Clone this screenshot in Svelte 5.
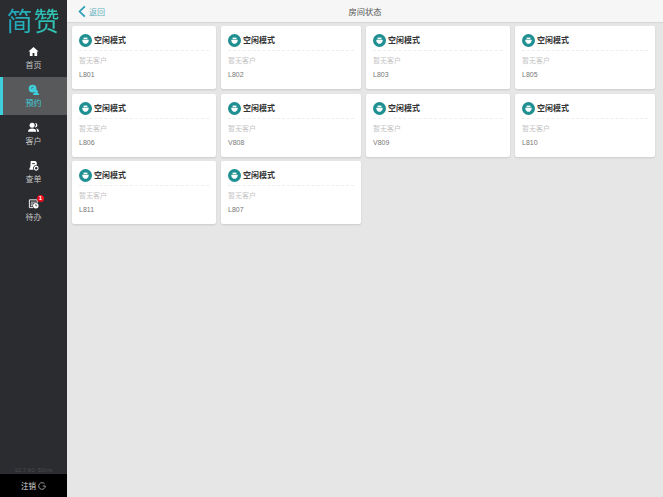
<script>
  const rooms = ['L801', 'L802', 'L803', 'L805', 'L806', 'V808', 'V809', 'L810', 'L811', 'L807'];
</script>

<div class="page">
  <aside class="sidebar">
    <div class="logo">简赞</div>
    <nav>
      <div class="nav-item">
        <svg viewBox="0 0 24 24" width="11" height="11">
          <path fill="currentColor" d="M12 2 1 12h3v10h6v-7h4v7h6V12h3z"/>
        </svg>
        <span>首页</span>
      </div>
      <div class="nav-item active">
        <svg viewBox="0 0 24 24" width="11" height="11">
          <circle cx="10" cy="10" r="8.5" fill="currentColor"/>
          <path fill="none" stroke="#5a5c5e" stroke-width="2" d="M7 10a3 3 0 0 1 5-2"/>
          <circle cx="18" cy="16" r="3.500" fill="currentColor"/>
          <path fill="currentColor" d="M11 24c0-4 3-6 7-6s6 2 6 6z"/>
        </svg>
        <span>预约</span>
      </div>
      <div class="nav-item">
        <svg viewBox="0 0 24 24" width="11" height="11">
          <circle cx="9" cy="7" r="5.5" fill="currentColor"/>
          <path fill="currentColor" d="M0 21c0-5 4-7 9-7s9 2 9 7z"/>
          <path fill="currentColor" d="M15 2a5 5 0 0 1 1 10l-1-1a6 6 0 0 0 0-9zM18 14c3 0 6 2 6 7h-4c0-3-1-5-2-7z"/>
        </svg>
        <span>客户</span>
      </div>
      <div class="nav-item">
        <svg viewBox="0 0 24 24" width="11" height="11">
          <path fill="currentColor" d="M6 2h10l3 3v7a6 6 0 0 0-7 9H3c0-3 1-4 2-5z"/>
          <path fill="#2b2c30" d="M9 7h6v2H9z"/>
          <circle cx="18" cy="18" r="4" fill="none" stroke="currentColor" stroke-width="2.4"/>
        </svg>
        <span>查单</span>
      </div>
      <div class="nav-item">
        <span class="icon-wrap">
          <svg viewBox="0 0 24 24" width="11" height="11">
            <path fill="none" stroke="currentColor" stroke-width="2" d="M3 4h17v7M3 4v17h8"/>
            <path fill="currentColor" d="M6 8h11v2H6zM6 12h5v2H6zM6 16h4v2H6z"/>
            <circle cx="17" cy="17" r="6" fill="currentColor"/>
            <path fill="none" stroke="#2b2c30" stroke-width="1.6" d="M17 13.500V17h3"/>
          </svg>
          <b class="badge">1</b>
        </span>
        <span>待办</span>
      </div>
    </nav>
    <div class="version">12.7.60&nbsp;&nbsp;50ms</div>
    <div class="logout">
      <span>注销</span>
      <svg viewBox="0 0 12 12" width="8" height="8">
        <path fill="none" stroke="currentColor" stroke-width="1" d="M10 3a5 5 0 1 0 1 3H7"/>
      </svg>
    </div>
  </aside>

  <main>
    <header>
      <div class="back">
        <svg viewBox="0 0 10 16" width="8" height="13">
          <path fill="none" stroke="currentColor" stroke-width="2.2" d="M8.5 1.500 2 8l6.5 6.500"/>
        </svg>
        <span>返回</span>
      </div>
      <h1>房间状态</h1>
    </header>

    <div class="grid">
      {#each rooms as room}
        <div class="card">
          <div class="card-head">
            <span class="cup">
              <svg viewBox="0 0 14 14" width="9" height="9">
                <path fill="#fff" d="M2 6h10v1a5 5 0 0 1-3 4.500V12H5v-.5A5 5 0 0 1 2 7z"/>
                <path fill="#fff" d="M4 2.500h6v2.500H4z"/>
              </svg>
            </span>
            <span class="mode">空闲模式</span>
          </div>
          <div class="customer">暂无客户</div>
          <div class="room">{room}</div>
        </div>
      {/each}
    </div>
  </main>
</div>

<style>
  :global(body) {
    margin: 0;
    background: #e6e6e6;
  }

  .page {
    display: flex;
    height: 497px;
    width: 663px;
    overflow: hidden;
    font-family: "Liberation Sans", "Noto Sans CJK SC", sans-serif;
  }

  .sidebar {
    width: 67px;
    flex-shrink: 0;
    display: flex;
    flex-direction: column;
    background: #2b2c30;
    color: #fff;
  }

  .logo {
    height: 38px;
    padding-top: 2px;
    box-sizing: border-box;
    font-family: "Noto Sans CJK SC", sans-serif;
    font-size: 26px;
    font-weight: 400;
    line-height: 36px;
    letter-spacing: 1px;
    text-align: center;
    white-space: nowrap;
    background: linear-gradient(to right, #1d9fc0, #35d0b0);
    -webkit-background-clip: text;
    background-clip: text;
    color: transparent;
  }

  nav {
    flex: 1;
    margin-top: 1px;
  }

  .nav-item {
    height: 38px;
    display: flex;
    flex-direction: column;
    align-items: center;
    justify-content: center;
    gap: 4px;
    font-size: 8px;
    line-height: 10px;
    color: #c4c4c4;
  }

  .nav-item svg {
    color: #fff;
    display: block;
  }

  .nav-item.active {
    background: #58595b;
    border-left: 3px solid #3fd0dc;
    box-sizing: border-box;
    padding-right: 3px;
    color: #3fd0dc;
  }

  .nav-item.active svg {
    color: #3fd0dc;
  }

  .icon-wrap {
    position: relative;
    display: block;
  }

  .badge {
    position: absolute;
    top: -3px;
    right: -5px;
    width: 7px;
    height: 7px;
    border-radius: 50%;
    background: #f01020;
    color: #fff;
    font-size: 6px;
    line-height: 7px;
    text-align: center;
    font-weight: 700;
  }

  .version {
    font-size: 6px;
    line-height: 8px;
    height: 8px;
    text-align: center;
    color: #4a4b4f;
  }

  .logout {
    height: 23px;
    background: #000;
    color: #ddd;
    font-size: 7.5px;
    display: flex;
    align-items: center;
    justify-content: center;
    gap: 2px;
  }

  main {
    flex: 1;
    min-width: 0;
  }

  header {
    height: 22px;
    position: relative;
    display: flex;
    align-items: center;
    justify-content: center;
    background: #f6f6f6;
    box-shadow: 0 1px 1px rgba(0, 0, 0, 0.06);
  }

  .back {
    position: absolute;
    left: 11px;
    top: 5px;
    display: flex;
    align-items: center;
    gap: 3px;
    color: #2a9db5;
    font-size: 8px;
  }

  .back span {
    color: #5fb0c0;
  }

  h1 {
    margin: 0;
    font-size: 8.25px;
    font-weight: 400;
    color: #555;
  }

  .grid {
    display: grid;
    grid-template-columns: 144px 140px 144px 140px;
    grid-auto-rows: 63px;
    gap: 4.500px 5px;
    padding: 4px 0 0 5px;
  }

  .card {
    box-sizing: border-box;
    background: #fff;
    border-radius: 2px;
    box-shadow: 0 1px 2px rgba(0, 0, 0, 0.12);
    padding: 8px 7px 0;
  }

  .card-head {
    display: flex;
    align-items: flex-start;
    gap: 2px;
    height: 17px;
    border-bottom: 1px dashed #eeeeee;
    margin-bottom: 5px;
    box-sizing: border-box;
  }

  .cup {
    width: 13px;
    height: 13px;
    border-radius: 50%;
    background: #1f8f92;
    display: flex;
    align-items: center;
    justify-content: center;
    flex-shrink: 0;
  }

  .mode {
    font-size: 8px;
    line-height: 13px;
    color: #333;
    font-weight: 700;
  }

  .customer {
    font-size: 7px;
    line-height: 10px;
    color: #c4c4c4;
    margin-bottom: 4px;
  }

  .room {
    font-size: 7px;
    line-height: 10px;
    color: #777;
  }
</style>
